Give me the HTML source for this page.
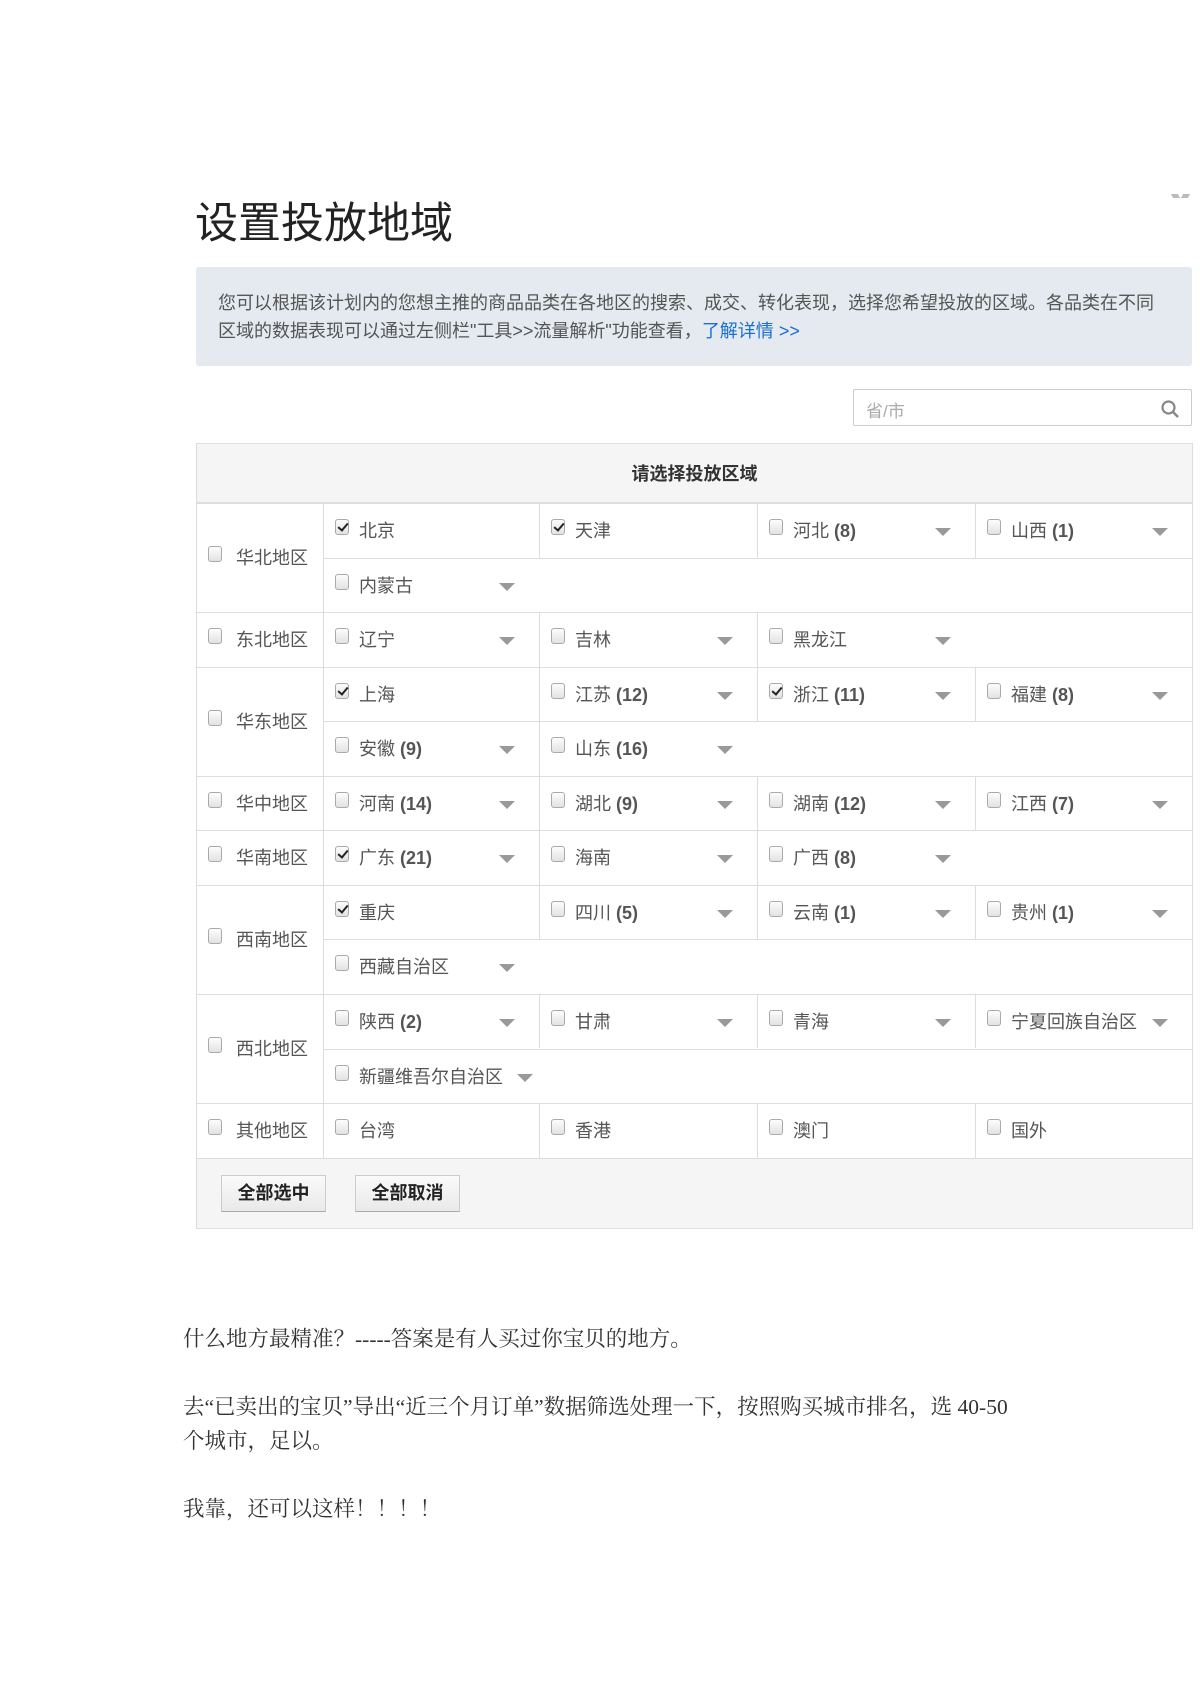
<!DOCTYPE html>
<html><head><meta charset="utf-8">
<style>
*{margin:0;padding:0;box-sizing:border-box}
body{width:1200px;height:1698px;background:#fff;position:relative;font-family:"Liberation Sans","Noto Sans CJK SC",sans-serif;color:#555;overflow:hidden}
.a{position:absolute}
.title{left:195px;top:199px;font-size:43px;color:#222;line-height:50px;letter-spacing:0px}
.info{left:196px;top:267px;width:996px;height:99px;background:#e4eaef;border-radius:3px;font-size:18px;line-height:28px;padding:22px 0 0 22px;color:#555;white-space:nowrap}
.info a{color:#1a6fd0;text-decoration:none}
.search{left:853px;top:389px;width:339px;height:37px;border:1px solid #ccc;border-radius:2px;font-size:17px;color:#aaa;padding:7px 12px}
.tbl{left:196px;top:443px;width:997px;height:786px;border:1px solid #ddd}
.hd{left:196px;top:443px;width:997px;height:60px;background:#f5f5f5;border:1px solid #ddd;text-align:center;font-weight:bold;font-size:18px;line-height:60px;color:#333}
.hl{height:1px;background:#ddd}
.vl{width:1px;background:#ddd}
.c{position:absolute;height:54px;font-size:18px;line-height:54px;white-space:nowrap}
.cb{position:absolute;top:16px;width:14px;height:16px;border:1px solid #aaa;border-radius:3px;background:linear-gradient(#fdfdfd,#e2e2e2)}
.cb.k::after{content:"";position:absolute;left:4px;top:1px;width:4px;height:8px;border:solid #222;border-width:0 2.5px 2.5px 0;transform:rotate(40deg)}
.t{position:absolute;top:1px}
.t b{font-weight:bold;color:#555}
.ar{position:absolute;top:25px;width:0;height:0;border-left:8px solid transparent;border-right:8px solid transparent;border-top:8px solid #999}
.btns{left:197px;top:1158px;width:995px;height:70px;background:#f5f5f5}
.btn{position:absolute;top:1175px;width:105px;height:37px;border:1px solid #ccc;border-bottom-color:#aaa;background:linear-gradient(#fafafa,#e9e9e9);font-weight:bold;font-size:18px;line-height:35px;text-align:center;color:#222}
.p{left:183px;font-family:"Liberation Serif","Noto Serif CJK SC",serif;font-size:21.5px;color:#333;line-height:34px;white-space:nowrap}
</style></head><body>
<div class="a title">设置投放地域</div>
<div class="a" style="left:1172px;top:194px;width:7px;height:4px;background:#bbb;transform:skewX(30deg)"></div>
<div class="a" style="left:1182px;top:194px;width:7px;height:4px;background:#bbb;transform:skewX(-30deg)"></div>
<div class="a info">您可以根据该计划内的您想主推的商品品类在各地区的搜索、成交、转化表现，选择您希望投放的区域。各品类在不同<br>区域的数据表现可以通过左侧栏"工具&gt;&gt;流量解析"功能查看，<a>了解详情 &gt;&gt;</a></div>
<div class="a search">省/市
<svg class="a" style="left:306px;top:9px" width="20" height="20" viewBox="0 0 20 20"><circle cx="8.5" cy="8.5" r="6" fill="none" stroke="#888" stroke-width="2.2"/><line x1="13" y1="13" x2="18" y2="18" stroke="#888" stroke-width="2.5"/></svg></div>
<div class="a tbl"></div>
<div class="a hd">请选择投放区域</div>
<div class="a btns"></div>
<div class="btn" style="left:221px">全部选中</div>
<div class="btn" style="left:355px">全部取消</div>
<div id="g"></div>

<div class="a p" style="top:1322px">什么地方最精准？-----答案是有人买过你宝贝的地方。</div>
<div class="a p" style="top:1390px">去“已卖出的宝贝”导出“近三个月订单”数据筛选处理一下，按照购买城市排名，选 40-50</div>
<div class="a p" style="top:1424px">个城市，足以。</div>
<div class="a p" style="top:1492px">我靠，还可以这样！！！！</div>

<script>
var X=[196,323,539,757,975,1192],T=503,H=54.55,h='';
var R=[
 ['华北地区',[[['北京',1,0],['天津',1,0],['河北','8',1],['山西','1',1]],[['内蒙古',0,1]]]],
 ['东北地区',[[['辽宁',0,1],['吉林',0,1],['黑龙江',0,1]]]],
 ['华东地区',[[['上海',1,0],['江苏','12',1],['浙江','11',1,1],['福建','8',1]],[['安徽','9',1],['山东','16',1]]]],
 ['华中地区',[[['河南','14',1],['湖北','9',1],['湖南','12',1],['江西','7',1]]]],
 ['华南地区',[[['广东','21',1,1],['海南',0,1],['广西','8',1]]]],
 ['西南地区',[[['重庆',1,0],['四川','5',1],['云南','1',1],['贵州','1',1]],[['西藏自治区',0,1]]]],
 ['西北地区',[[['陕西','2',1],['甘肃',0,1],['青海',0,1],['宁夏回族自治区',0,1]],[['新疆维吾尔自治区',0,2]]]],
 ['其他地区',[[['台湾',0,0],['香港',0,0],['澳门',0,0],['国外',0,0]]]]
];
var y=T;
R.forEach(function(r){
 var n=r[1].length,rh=n*H;
 h+='<div class="a hl" style="left:196px;top:'+y+'px;width:997px"></div>';
 h+='<div class="a vl" style="left:323px;top:'+y+'px;height:'+rh+'px"></div>';
 h+='<div class="c" style="left:196px;top:'+(y+(rh-H)/2)+'px;width:127px"><span class="cb" style="left:12px"></span><span class="t" style="left:40px">'+r[0]+'</span></div>';
 r[1].forEach(function(sr,si){
  var yy=y+si*H;
  if(si>0)h+='<div class="a hl" style="left:323px;top:'+yy+'px;width:870px"></div>';
  sr.forEach(function(c,i){
   var l=X[i+1],w=X[i+2]-l;
   var chk=(c[1]===1||c[3])?' k':'';
   var lab=c[0]+((typeof c[1]==='string')?' <b>('+c[1]+')</b>':'');
   h+='<div class="c" style="left:'+l+'px;top:'+yy+'px;width:'+w+'px"><span class="cb'+chk+'" style="left:12px"></span><span class="t" style="left:36px">'+lab+'</span>';
   if(c[2]==1)h+='<span class="ar" style="left:'+(w-40)+'px"></span>';
   if(c[2]==2)h+='<span class="ar" style="left:'+(w-22)+'px"></span>';
   h+='</div>';
   if(i<sr.length-1)h+='<div class="a vl" style="left:'+X[i+2]+'px;top:'+yy+'px;height:'+H+'px"></div>';
  });
 });
 y+=rh;
});
h+='<div class="a hl" style="left:196px;top:'+y+'px;width:997px"></div>';
document.getElementById('g').innerHTML=h;
</script>
</body></html>
